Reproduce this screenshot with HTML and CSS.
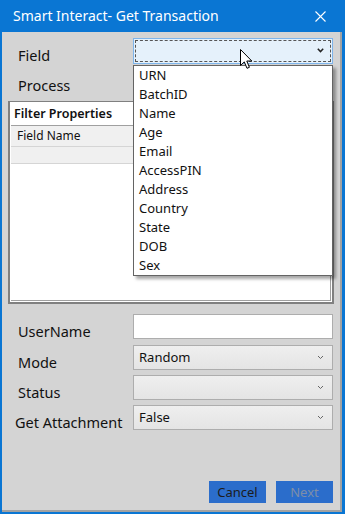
FILE: index.html
```html
<!DOCTYPE html>
<html>
<head>
	<title>Smart Interact- Get Transaction</title>
	<link rel="stylesheet" href="styles.css">
</head>
<body>
<div class="window">
	<!-- title bar -->
	<div class="titlebar">
		<span class="title">Smart Interact- Get Transaction</span>
		<svg class="close" width="11" height="11" viewBox="0 0 11 11">
			<path d="M0.5 0.5 L10.5 10.5 M10.5 0.5 L0.5 10.5" stroke="#fff" stroke-width="1.1" fill="none"/>
		</svg>
	</div>

	<div class="client">
		<div class="row first">
			<label class="lbl">Field</label>
			<div class="combo focus">
				<svg class="chev" width="7" height="5" viewBox="0 0 7 5"><path d="M0.8 0.8 L3.5 3.6 L6.2 0.8" stroke="#222" stroke-width="1.5" fill="none"/></svg>
			</div>
		</div>
		<div class="row">
			<label class="lbl">Process</label>
			<div class="combo"></div>
		</div>

		<!-- filter grid -->
		<div class="group">
			<div class="grid">
				<div class="caption">Filter Properties</div>
				<div class="colhead">Field Name</div>
				<div class="gridrow"></div>
			</div>
		</div>

		<div class="row small user">
			<label class="lbl">UserName</label>
			<div class="textbox"></div>
		</div>
		<div class="row small mode">
			<label class="lbl">Mode</label>
			<div class="combo">Random
				<svg class="chev" width="7" height="5" viewBox="0 0 7 5"><path d="M1 1 L3.5 3.5 L6 1" stroke="#666" stroke-width="1" fill="none"/></svg>
			</div>
		</div>
		<div class="row small">
			<label class="lbl">Status</label>
			<div class="combo">
				<svg class="chev" width="7" height="5" viewBox="0 0 7 5"><path d="M1 1 L3.5 3.5 L6 1" stroke="#666" stroke-width="1" fill="none"/></svg>
			</div>
		</div>
		<div class="row small">
			<label class="lbl wide">Get Attachment</label>
			<div class="combo">False
				<svg class="chev" width="7" height="5" viewBox="0 0 7 5"><path d="M1 1 L3.5 3.5 L6 1" stroke="#666" stroke-width="1" fill="none"/></svg>
			</div>
		</div>

		<div class="buttons">
			<button class="btn">Cancel</button>
			<button class="btn disabled">Next</button>
		</div>

		<!-- open list of the Field combo -->
		<ul class="droplist">
			<li>URN</li>
			<li>BatchID</li>
			<li>Name</li>
			<li>Age</li>
			<li>Email</li>
			<li>AccessPIN</li>
			<li>Address</li>
			<li>Country</li>
			<li>State</li>
			<li>DOB</li>
			<li>Sex</li>
		</ul>

		<svg class="cursor" width="13" height="21" viewBox="0 0 13 21">
			<path d="M0.5 0.5 L0.5 16.5 L4.3 12.9 L7 19.3 L9.4 18.3 L6.8 12 L11.8 12 Z" fill="#fff" stroke="#000" stroke-width="1"/>
		</svg>
	</div>
</div>
</body>
</html>
```

FILE: styles.css
```css
body {
	margin: 0;
	background-color: #0a76d3;
	font-family: "Noto Sans", "Open Sans", sans-serif;
	color: #111;
}

.window {
	width: 345px;
	height: 514px;
	display: flex;
	flex-direction: column;
}

.titlebar {
	height: 32px;
	display: flex;
	align-items: center;
	justify-content: space-between;
	padding: 0 19px 0 13px;
	color: white;
}

.title {
	font-size: 14px;
	line-height: 18px;
	margin-top: -1px;
}

.client {
	flex: 1;
	margin: 0 3px 2px 2px;
	background-color: #d4d4d4;
	border-right: 2px solid #a2a2a2;
	border-bottom: 2px solid #a2a2a2;
	display: flex;
	flex-direction: column;
	position: relative;
	padding-bottom: 7px;
}

.row {
	display: flex;
	align-items: center;
	height: 26px;
	margin-top: 4px;
	padding-left: 16px;
}

.row.first {
	margin-top: 6px;
}

.row.small {
	height: 25px;
	margin-top: 5px;
}

.row.user {
	margin-top: 10px;
}

.row.mode {
	margin-top: 6px;
}

.lbl {
	width: 115px;
	font-size: 14.5px;
	line-height: 18px;
	padding-top: 8px;
}

.lbl.wide {
	margin-left: -3px;
	width: 118px;
}

.combo, .textbox {
	box-sizing: border-box;
	width: 200px;
	height: 100%;
	border: 1px solid #adadad;
	background: linear-gradient(#efefef, #e4e4e4);
	position: relative;
	font-size: 13px;
	line-height: 22px;
	padding-left: 5px;
}

.textbox {
	background: white;
}

.combo.focus {
	background: #e5f1fb;
	border-color: #7eb4ea;
	outline: 1px dashed #555;
	outline-offset: -3px;
}

.chev {
	position: absolute;
	right: 8px;
	top: 9px;
}

.group {
	margin: 7px 6px 0 6px;
	height: 203px;
	box-sizing: border-box;
	border: 2px solid #808080;
	border-top-width: 1px;
	background: white;
	padding: 1px;
}

.grid {
	height: 100%;
	box-sizing: border-box;
	border-right: 1px solid #a0a0a0;
	border-bottom: 1px solid #a0a0a0;
}

.caption {
	height: 22px;
	line-height: 22px;
	padding-left: 3px;
	font-size: 12.5px;
	font-weight: 600;
	border-bottom: 1px solid #a0a0a0;
}

.colhead {
	height: 20px;
	line-height: 20px;
	padding-left: 6px;
	font-size: 12px;
	background: #f0f0f0;
	border-bottom: 1px solid #d5d5d5;
}

.gridrow {
	height: 16px;
	background: #f0f0f0;
	border-bottom: 1px solid #d5d5d5;
}

.buttons {
	margin-top: auto;
	display: flex;
	justify-content: flex-end;
	gap: 10px;
	padding-right: 7px;
}

.btn {
	width: 57px;
	height: 22px;
	border: none;
	background-color: #2b6dcb;
	font-family: "Noto Sans", "Open Sans", sans-serif;
	font-size: 13px;
	color: #1c1c1c;
	padding: 0;
}

.btn.disabled {
	color: #7d8ea8;
}

.droplist {
	position: absolute;
	left: 131px;
	top: 33px;
	width: 200px;
	box-sizing: border-box;
	margin: 0;
	padding: 0;
	list-style: none;
	background: white;
	border: 1px solid #646464;
	box-shadow: 3px 3px 3px rgba(0, 0, 0, 0.35);
}

.droplist li {
	height: 19px;
	line-height: 19px;
	padding-left: 5px;
	font-size: 13px;
}

.cursor {
	position: absolute;
	left: 238px;
	top: 17px;
}
```
